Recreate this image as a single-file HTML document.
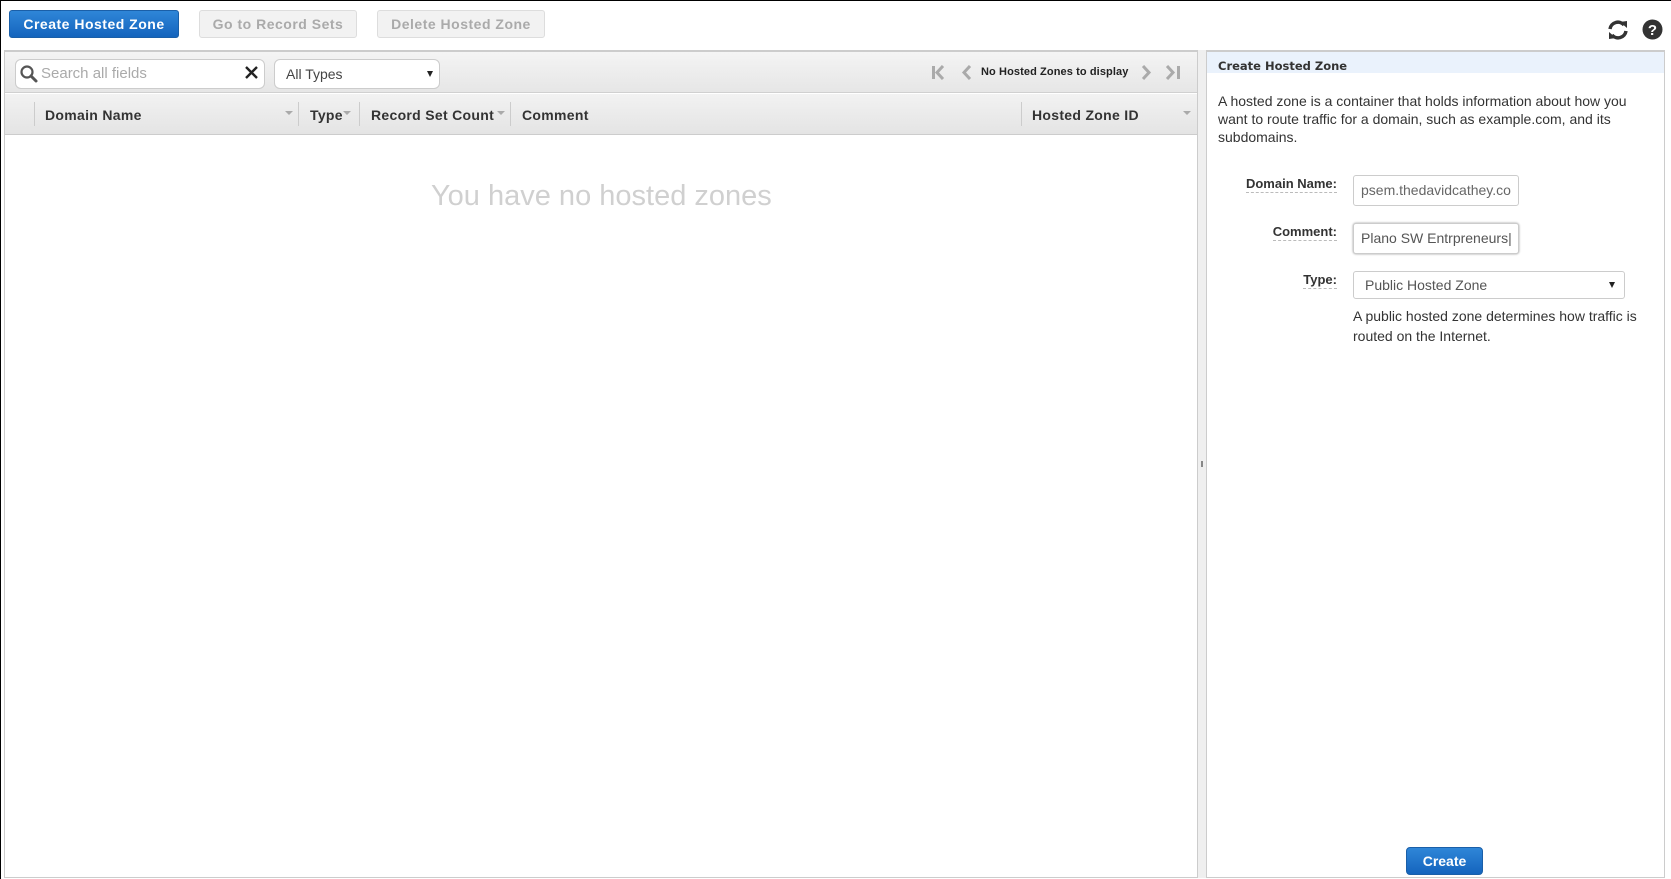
<!DOCTYPE html>
<html><head><meta charset="utf-8"><style>
*{box-sizing:border-box;margin:0;padding:0}
body{width:1671px;height:879px;position:relative;background:#fff;font-family:"Liberation Sans",sans-serif;overflow:hidden;border-top:1px solid #000;border-left:1px solid #000}
.a{position:absolute}
.btn{position:absolute;top:9px;height:28px;border-radius:3px;font-weight:bold;font-size:14px;text-align:center;line-height:26px;letter-spacing:0.5px}
.gb{background:#f2f2f2;border:1px solid #ddd;color:#aaa}
.hd{font-weight:bold;font-size:14px;color:#333;position:absolute;top:106px;letter-spacing:0.3px}
.dv{position:absolute;top:101px;width:1px;height:24px;background:#ccc}
.ar{position:absolute;top:110px;width:0;height:0;border-left:4px solid transparent;border-right:4px solid transparent;border-top:4px solid #aaa}
.lbl{position:absolute;right:334px;font-weight:bold;font-size:13px;color:#333;border-bottom:1px dashed #bbb;line-height:16px}
.inp{position:absolute;left:1352px;border:1px solid #ccc;border-radius:3px;font-size:14px;color:#555;padding-left:7px;line-height:28px;background:#fff;white-space:nowrap;overflow:hidden}
</style></head><body>
<div class="btn" style="left:8px;width:170px;background:linear-gradient(#2f86d8,#1464bd);border:1px solid #1a5fa8;color:#fff">Create Hosted Zone</div>
<div class="btn gb" style="left:198px;width:158px">Go to Record Sets</div>
<div class="btn gb" style="left:376px;width:168px">Delete Hosted Zone</div>
<svg class="a" style="left:1606px;top:19px" width="22" height="20" viewBox="0 0 22 20"><path d="M3 9 A8 8 0 0 1 17 5" fill="none" stroke="#333" stroke-width="3.5"/><path d="M13 2 L20 1 L20 8 Z" fill="#333"/><path d="M19 11 A8 8 0 0 1 5 15" fill="none" stroke="#333" stroke-width="3.5"/><path d="M9 18 L2 19 L2 12 Z" fill="#333"/></svg>
<svg class="a" style="left:1641px;top:18px" width="21" height="21" viewBox="0 0 21 21"><circle cx="10.5" cy="10.5" r="10" fill="#333"/><text x="10.5" y="16" text-anchor="middle" font-family="Liberation Sans" font-weight="bold" font-size="15" fill="#fff">?</text></svg>
<!-- left panel -->
<div class="a" style="left:3px;top:49px;width:1194px;height:828px;border:1px solid #ccc;border-top:2px solid #ccc"></div>
<div class="a" style="left:4px;top:51px;width:1192px;height:41px;background:linear-gradient(#f4f4f4,#e6e6e6);border-bottom:1px solid #d0d0d0"></div>
<div class="a" style="left:4px;top:93px;width:1192px;height:41px;background:linear-gradient(#f2f2f2,#e4e4e4);border-bottom:1px solid #ccc"></div>
<div class="a" style="left:14px;top:58px;width:250px;height:30px;background:#fff;border:1px solid #ccc;border-radius:6px"></div>
<svg class="a" style="left:18px;top:63px" width="20" height="20" viewBox="0 0 20 20"><circle cx="8" cy="8" r="5.5" fill="none" stroke="#555" stroke-width="2.2"/><path d="M12 12 L17 17" stroke="#555" stroke-width="3" stroke-linecap="round"/></svg>
<div class="a" style="left:40px;top:64px;font-size:15px;color:#aaa">Search all fields</div>
<svg class="a" style="left:243px;top:64px" width="15" height="15" viewBox="0 0 15 15"><path d="M2 2L13 13M13 2L2 13" stroke="#222" stroke-width="2.4"/></svg>
<div class="a" style="left:273px;top:58px;width:166px;height:30px;background:#fff;border:1px solid #ccc;border-radius:6px;font-size:14px;color:#444;padding-left:11px;line-height:28px">All Types</div>
<div class="a" style="left:426px;top:70px;border-left:3.5px solid transparent;border-right:3.5px solid transparent;border-top:6px solid #222"></div>
<svg class="a" style="left:930px;top:64px" width="18" height="15" viewBox="0 0 18 15"><rect x="1" y="1" width="3" height="13" fill="#aaa"/><path d="M12 1L6 7.5L12 14" fill="none" stroke="#aaa" stroke-width="3"/></svg>
<svg class="a" style="left:960px;top:64px" width="12" height="15" viewBox="0 0 12 15"><path d="M9 1L3 7.5L9 14" fill="none" stroke="#aaa" stroke-width="3"/></svg>
<div class="a" style="left:980px;top:65px;font-size:11px;font-weight:bold;color:#222;letter-spacing:0.1px">No Hosted Zones to display</div>
<svg class="a" style="left:1139px;top:64px" width="12" height="15" viewBox="0 0 12 15"><path d="M3 1L9 7.5L3 14" fill="none" stroke="#aaa" stroke-width="3"/></svg>
<svg class="a" style="left:1163px;top:64px" width="18" height="15" viewBox="0 0 18 15"><path d="M3 1L9 7.5L3 14" fill="none" stroke="#aaa" stroke-width="3"/><rect x="13" y="1" width="3" height="13" fill="#aaa"/></svg>
<div class="dv" style="left:33px"></div><div class="hd" style="left:44px">Domain Name</div><div class="ar" style="left:284px"></div>
<div class="dv" style="left:297px"></div><div class="hd" style="left:309px">Type</div><div class="ar" style="left:342px"></div>
<div class="dv" style="left:358px"></div><div class="hd" style="left:370px">Record Set Count</div><div class="ar" style="left:496px"></div>
<div class="dv" style="left:509px"></div><div class="hd" style="left:521px">Comment</div>
<div class="dv" style="left:1020px"></div><div class="hd" style="left:1031px">Hosted Zone ID</div><div class="ar" style="left:1182px"></div>
<div class="a" style="left:430px;top:179px;font-size:29px;color:#d0d0d0">You have no hosted zones</div>
<!-- splitter -->
<div class="a" style="left:1197px;top:49px;width:8px;height:828px;background:#efefef"></div>
<div class="a" style="left:1200px;top:460px;width:2px;height:6px;border-left:1px solid #888;border-right:1px solid #888"></div>
<!-- right panel -->
<div class="a" style="left:1205px;top:49px;width:459px;height:828px;border:1px solid #ccc;border-top:2px solid #ccc"></div>
<div class="a" style="left:1206px;top:51px;width:457px;height:21px;background:#eaf2fc"></div>
<div class="a" style="left:1217px;top:58px;font-size:11.5px;font-weight:bold;color:#333;font-family:'DejaVu Sans',sans-serif">Create Hosted Zone</div>
<div class="a" style="left:1217px;top:91px;width:440px;font-size:14px;line-height:18px;color:#333">A hosted zone is a container that holds information about how you want to route traffic for a domain, such as example.com, and its subdomains.</div>
<div class="lbl" style="top:175px">Domain Name:</div>
<div class="inp" style="top:174px;width:166px;height:31px;color:#666">psem.thedavidcathey.co</div>
<div class="lbl" style="top:223px">Comment:</div>
<div class="inp" style="top:222px;width:166px;height:31px;box-shadow:0 0 2px #999">Plano SW Entrpreneurs|</div>
<div class="lbl" style="top:271px">Type:</div>
<div class="inp" style="top:270px;width:272px;height:28px;line-height:26px;padding-left:11px">Public Hosted Zone</div>
<div class="a" style="left:1608px;top:281px;border-left:3.5px solid transparent;border-right:3.5px solid transparent;border-top:6px solid #222"></div>
<div class="a" style="left:1352px;top:305px;width:300px;font-size:14px;line-height:20px;color:#333">A public hosted zone determines how traffic is routed on the Internet.</div>
<div class="a" style="left:1405px;top:846px;width:77px;height:28px;border-radius:4px;background:linear-gradient(#2f86d8,#1464bd);border:1px solid #1a5fa8;color:#fff;font-weight:bold;font-size:14px;text-align:center;line-height:26px">Create</div>
</body></html>
